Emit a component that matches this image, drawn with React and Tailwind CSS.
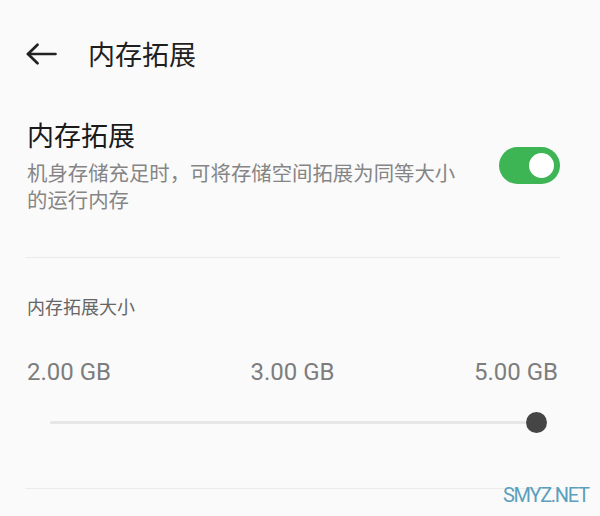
import { useState } from 'react';

const cjk = { fontFamily: '"Noto Sans CJK SC", "Noto Sans", sans-serif' };

function BackArrow() {
  return (
    <svg width="31" height="22" viewBox="0 0 31 22" fill="none" stroke="#222222" strokeWidth="2.7" strokeLinecap="round" strokeLinejoin="round">
      <path d="M29.5 11H2" />
      <path d="M11.5 1.8L2 11l9.5 9.2" />
    </svg>
  );
}

function Toggle({ on, onChange }) {
  return (
    <button
      onClick={() => onChange(!on)}
      className={`flex items-center w-[61px] h-[37px] rounded-full px-[6px] shrink-0 ${on ? 'bg-[#3db554] justify-end' : 'bg-[#cfcfcf] justify-start'}`}
    >
      <span className="block w-[25px] h-[25px] rounded-full bg-white" />
    </button>
  );
}

export default function App() {
  const [enabled, setEnabled] = useState(true);
  const sizes = ['2.00 GB', '3.00 GB', '5.00 GB'];

  return (
    <div className="relative w-[600px] h-[516px] overflow-hidden bg-[#fafafa]" style={cjk}>
      {/* Header */}
      <div className="flex items-center h-[108px] pl-[26px]">
        <BackArrow />
        <span className="ml-[31px] text-[27px] leading-[36px] text-[#1f1f1f]">内存拓展</span>
      </div>

      {/* Toggle row */}
      <div className="flex items-center justify-between pt-[9px] pb-[44px] pl-[27px] pr-[40px]">
        <div className="flex flex-col">
          <span className="text-[27px] leading-[36px] text-[#1a1a1a]">内存拓展</span>
          <p className="mt-[6px] w-[440px] text-[20.4px] leading-[27px] text-[#858585]">
            机身存储充足时，可将存储空间拓展为同等大小的运行内存
          </p>
        </div>
        <Toggle on={enabled} onChange={setEnabled} />
      </div>

      <div className="h-px bg-[#ebebeb] ml-[25px] mr-[40px]" />

      {/* Size slider */}
      <div className="mt-[36px] pl-[27px] text-[18px] leading-[24px] text-[#666666]">内存拓展大小</div>

      <div className="mt-[40px] flex justify-between pl-[27px] pr-[42px] text-[24px] leading-[28px] text-[#7d7d7d]" style={{ fontFamily: 'Roboto, "Liberation Sans", sans-serif' }}>
        {sizes.map((s) => (
          <span key={s}>{s}</span>
        ))}
      </div>

      <div className="mt-[26px] flex items-center h-[21px] ml-[50px] mr-[53px]">
        <div className="flex-1 h-[3px] bg-[#e6e6e6] rounded-full" />
        <div className="w-[21px] h-[21px] rounded-full bg-[#454545] shrink-0" />
      </div>

      <div className="mt-[55px] h-px bg-[#ebebeb] ml-[25px] mr-[40px]" />

      {/* Watermark */}
      <span
        className="absolute left-[503px] top-[485px] text-[20px] leading-[20px] tracking-[-1.3px] text-[#5aa0bd]"
        style={{ fontFamily: 'Roboto, "Liberation Sans", sans-serif' }}
      >
        SMYZ.NET
      </span>
    </div>
  );
}
